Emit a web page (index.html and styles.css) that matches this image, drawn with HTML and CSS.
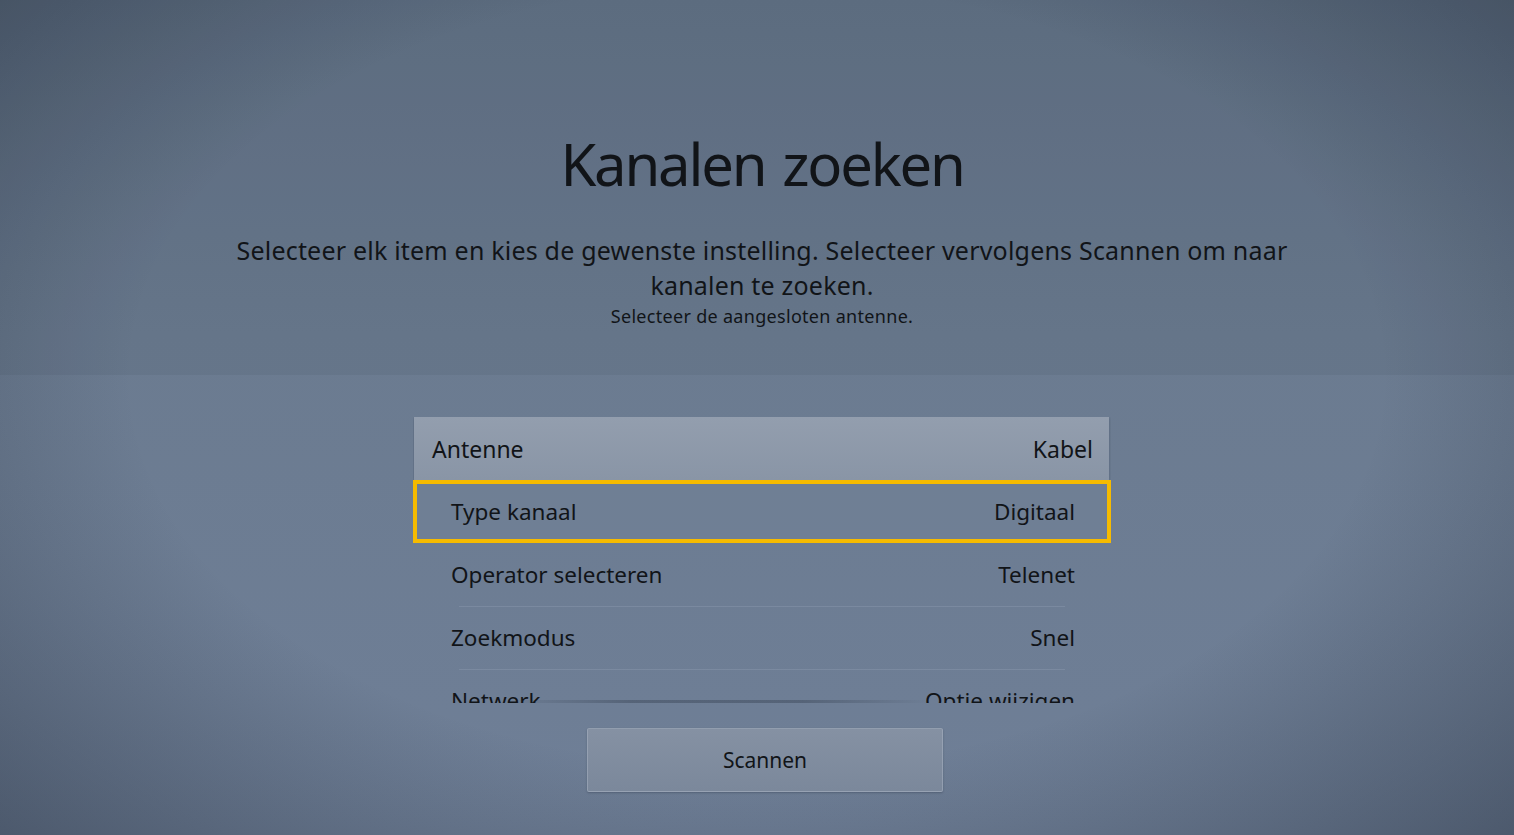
FILE: index.html
```html
<!DOCTYPE html>
<html lang="nl">
<head>
  <meta charset="UTF-8">
  <meta name="viewport" content="width=device-width, initial-scale=1.0">
  <title>Kanalen zoeken</title>
  <link rel="stylesheet" href="styles.css">
</head>
<body>

  <div class="screen">
    <div class="header">
      <h1>Kanalen zoeken</h1>
      <p class="desc">Selecteer elk item en kies de gewenste instelling. Selecteer vervolgens Scannen om naar kanalen te zoeken.</p>
      <p class="hint">Selecteer de aangesloten antenne.</p>
    </div>

    <div class="panel">
      <div class="list">
        <div class="row top">
          <span>Antenne</span>
          <span>Kabel</span>
        </div>
        <div class="row focus">
          <span>Type kanaal</span>
          <span>Digitaal</span>
        </div>
        <div class="row">
          <span>Operator selecteren</span>
          <span>Telenet</span>
        </div>
        <div class="row line">
          <span>Zoekmodus</span>
          <span>Snel</span>
        </div>
        <div class="row line">
          <span>Netwerk</span>
          <span>Optie wijzigen</span>
        </div>
      </div>

      <button class="scan">Scannen</button>
    </div>
  </div>

</body>
</html>
```

FILE: styles.css
```css
html, body {
  margin: 0;
  height: 100%;
}
body {
  font-family: "Noto Sans", "Open Sans", sans-serif;
  color: #111418;
  background-color: #66768c;
  overflow: hidden;
}
.screen {
  height: 835px;
  display: flex;
  flex-direction: column;
  padding-left: 10px;
  background:
    radial-gradient(ellipse 75% 85% at 50% 45%, rgba(255,255,255,0) 55%, rgba(20,28,40,0.45) 100%),
    linear-gradient(180deg, #617185 0%, #6b7b90 40%, #6f7f97 100%);
}
.header {
  height: 375px;
  box-sizing: border-box;
  margin-left: -10px;
  padding: 126px 0 0 10px;
  text-align: center;
  background: rgba(40, 50, 65, 0.08);
}
h1 {
  margin: 0;
  font-size: 58px;
  font-weight: 400;
  line-height: 76px;
  letter-spacing: -2.2px;
  word-spacing: 4px;
}
.desc {
  margin: 31px auto 0;
  width: 1080px;
  font-size: 25px;
  line-height: 35px;
  letter-spacing: 0.2px;
}
.hint {
  margin: 0;
  font-size: 18px;
  line-height: 26px;
  letter-spacing: 0.3px;
}
.panel {
  display: flex;
  flex-direction: column;
  align-items: center;
  padding-top: 42px;
}
.list {
  position: relative;
  width: 698px;
  height: 286px;
  overflow: hidden;
}
.list::after {
  content: "";
  position: absolute;
  left: 90px;
  right: 180px;
  bottom: 0;
  height: 3px;
  background: linear-gradient(90deg, rgba(40,50,65,0), rgba(40,50,65,0.35) 30%, rgba(40,50,65,0.35) 70%, rgba(40,50,65,0));
}
.row {
  height: 63px;
  display: flex;
  justify-content: space-between;
  align-items: center;
  box-sizing: border-box;
  padding: 0 36px 0 38px;
  font-size: 22.5px;
  position: relative;
}
.row.top {
  margin: 0 2px 0 1px;
  padding: 0 16px 0 18px;
  background: linear-gradient(180deg, #939eae, #8995a6);
  box-shadow: 0 1px 3px rgba(30,40,55,0.3);
  font-size: 23px;
}
.row.focus {
  border: 4px solid #f6bb00;
  padding: 0 32px 0 34px;
  background: rgba(120,135,155,0.25);
}
.row.line::before {
  content: "";
  position: absolute;
  top: 0;
  left: 46px;
  right: 46px;
  height: 1px;
  background: rgba(200,210,225,0.15);
}
.scan {
  margin: 25px 0 0 6px;
  width: 356px;
  height: 64px;
  font-family: inherit;
  font-size: 21px;
  color: #111418;
  background: linear-gradient(180deg, #8591a3, #7b889b);
  border: 1px solid rgba(170,180,195,0.5);
  border-radius: 2px;
  box-shadow: 0 1px 2px rgba(30,40,55,0.3);
}
```
